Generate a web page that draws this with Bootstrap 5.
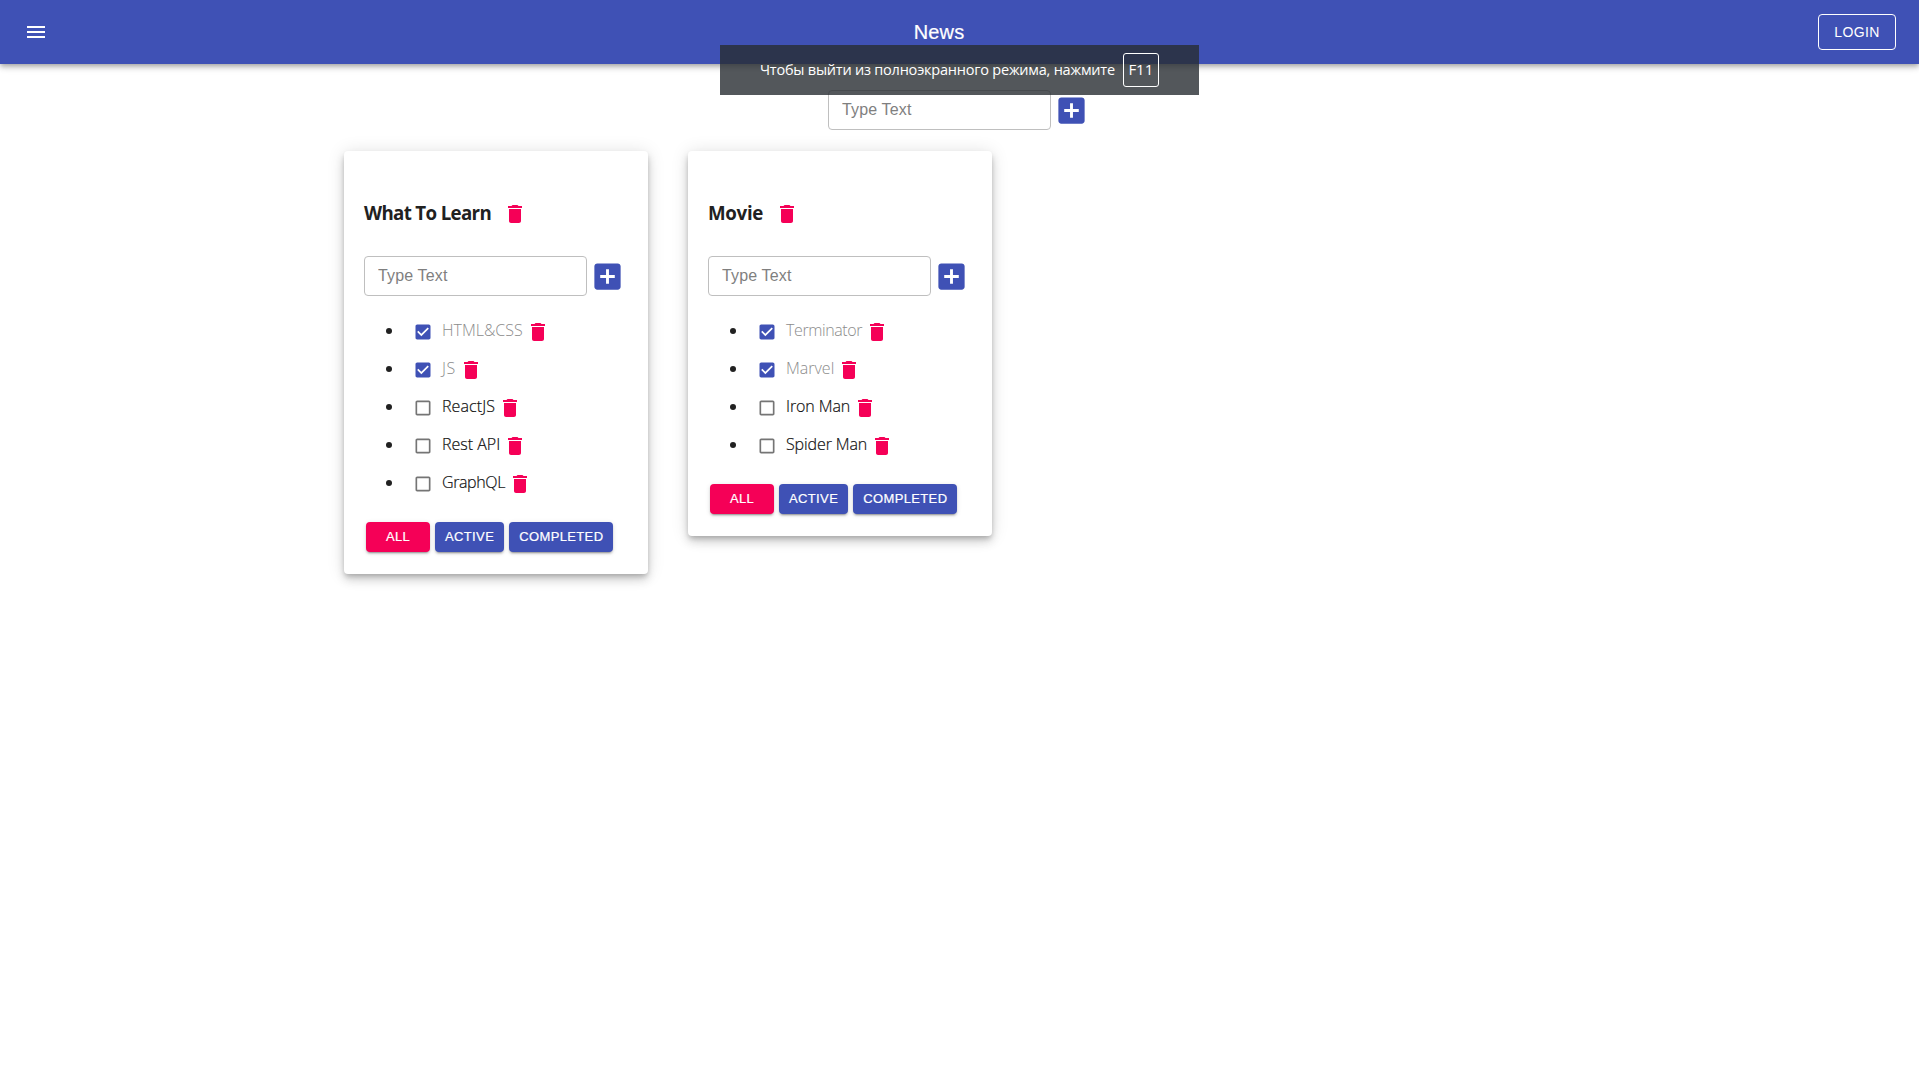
<!DOCTYPE html>
<html lang="ru">
<head>
<meta charset="utf-8">
<title>News</title>
<link rel="stylesheet" href="https://cdn.jsdelivr.net/npm/bootstrap@5.3.0/dist/css/bootstrap.min.css">
<style>
:root{--ink:#212121;--primary:#3f51b5;--accent:#f50057}
body{font-family:"Open Sans","Noto Sans",sans-serif;color:var(--ink);line-height:24px}
svg{display:block;flex:none;fill:currentColor}
.topbar{height:64px;padding:0 23px 0 24px;background:var(--primary);box-shadow:0 2px 4px -1px rgba(0,0,0,.2),0 4px 5px rgba(0,0,0,.14),0 1px 10px rgba(0,0,0,.12);font-family:"Liberation Sans",sans-serif}
.topbar h1{font-size:20px;letter-spacing:.15px;margin:0;-webkit-text-stroke:.2px #fff}
.menu-icon{margin-right:12px}
.login{font-size:14px;letter-spacing:.4px;line-height:24px;padding:5px 15px;border:1px solid #fff;border-radius:4px;color:#fff;background:none;height:36px;width:78px}
.page{width:1232px;margin-left:344px;padding-top:26px}
.field{width:223px;height:40px;border:1px solid #bfbfbf;border-radius:4px;padding:0 13px;font:16px "Liberation Sans",sans-serif;letter-spacing:.15px;background:#fff}
.field::placeholder{color:#7f7f7f;opacity:1}
.adder{gap:3px;color:var(--primary)}
.topadd{margin-left:484px;margin-bottom:21px}
.boards{gap:40px}
.board{width:304px;border:0;border-radius:4px;padding:49px 20px 20px;box-shadow:0 3px 5px -1px rgba(0,0,0,.2),0 6px 10px rgba(0,0,0,.14),0 1px 18px rgba(0,0,0,.12);color:var(--ink)}
.board h2{font-size:18.72px;font-weight:700;line-height:26px;margin:-1px 0 0;letter-spacing:-.32px}
.board h2.tight{letter-spacing:-.66px}
.titlebar{height:26px;margin-bottom:30px;gap:12px;color:var(--ink)}
.titlebar .bin{margin-top:2px}
.bin{color:var(--accent)}
.tasks{margin:16px 0 18px}
.task{height:38px}
.task::before{content:"";width:6px;height:6px;border-radius:50%;background:var(--ink);margin:0 21px 0 22px}
.task .box{color:#757575;margin:2px 9px 0 0}
.task .bin{margin:2px 0 0 3px}
.task .label{font-size:16px;font-weight:300;color:#111;white-space:nowrap;margin-top:-2px;-webkit-text-stroke:.2px currentColor}
.task.done .box{color:var(--primary)}
.task.done .label{color:#8c8c8c;-webkit-text-stroke:0}
.task .snug{letter-spacing:-.39px}
.task .close-set{letter-spacing:-.11px}
.task .airy{letter-spacing:.09px}
.task .loose{letter-spacing:.6px}
.filters{gap:5px;padding:2px}
.filters button{height:30px;min-width:64px;padding:0 10px 2px;border:0;border-radius:4px;background:var(--primary);color:#fff;font:13px "Liberation Sans",sans-serif;letter-spacing:.37px;-webkit-text-stroke:.2px #fff;box-shadow:0 3px 1px -2px rgba(0,0,0,.2),0 2px 2px rgba(0,0,0,.14),0 1px 5px rgba(0,0,0,.12)}
.filters .current{background:var(--accent)}
.notice{left:720px;top:45px;width:479px;height:50px;background:rgba(40,45,50,.8);color:#fff;font-size:14.5px;padding-left:40px;gap:8px}
.notice span{white-space:nowrap;letter-spacing:-.22px;margin-top:-1px}
.notice kbd{width:36px;height:34px;border:1px solid #fff;border-radius:3px;background:none;padding:0;font:15px/31px "Open Sans",sans-serif;text-align:center;color:#fff}
</style>
</head>
<body class="bg-white min-vh-100">
<svg class="d-none">
<symbol id="bin" viewBox="0 0 24 24"><path d="M6 19c0 1.100.900 2 2 2h8c1.100 0 2-.900 2-2V7H6v12zM19 4h-3.500l-1-1h-5l-1 1H5v2h14V4z"/></symbol>
<symbol id="add" viewBox="0 0 24 24"><path d="M19 3H5c-1.110 0-2 .900-2 2v14c0 1.100.890 2 2 2h14c1.100 0 2-.900 2-2V5c0-1.100-.900-2-2-2zm-2 10h-4v4h-2v-4H7v-2h4V7h2v4h4v2z"/></symbol>
<symbol id="on" viewBox="0 0 24 24"><path d="M19 3H5c-1.110 0-2 .900-2 2v14c0 1.100.890 2 2 2h14c1.110 0 2-.900 2-2V5c0-1.100-.890-2-2-2zm-9 14l-5-5 1.410-1.410L10 14.170l7.590-7.590L19 8l-9 9z"/></symbol>
<symbol id="off" viewBox="0 0 24 24"><path d="M19 5v14H5V5h14m0-2H5c-1.100 0-2 .900-2 2v14c0 1.100.900 2 2 2h14c1.100 0 2-.900 2-2V5c0-1.100-.900-2-2-2z"/></symbol>
</svg>
<header class="topbar d-flex align-items-center justify-content-between text-white position-relative">
<svg class="menu-icon" width="24" height="24" viewBox="0 0 24 24"><path d="M3 18h18v-2H3v2zm0-5h18v-2H3v2zm0-7v2h18V6H3z"/></svg>
<h1>News</h1>
<button class="login">LOGIN</button>
</header>
<main class="page">
<div class="adder topadd d-flex align-items-center"><input class="field" placeholder="Type Text"><svg width="35" height="35"><use href="#add"/></svg></div>
<div class="boards d-flex align-items-start">
<section class="board card">
<div class="titlebar d-flex align-items-center"><h2 class="tight">What To Learn</h2><svg class="bin" width="24" height="24"><use href="#bin"/></svg></div>
<div class="adder d-flex align-items-center"><input class="field" placeholder="Type Text"><svg width="35" height="35"><use href="#add"/></svg></div>
<ul class="tasks list-unstyled">
<li class="task done d-flex align-items-center"><svg class="box" width="20" height="20"><use href="#on"/></svg><span class="label">HTML&amp;CSS</span><svg class="bin" width="24" height="24"><use href="#bin"/></svg></li>
<li class="task done d-flex align-items-center"><svg class="box" width="20" height="20"><use href="#on"/></svg><span class="label loose">JS</span><svg class="bin" width="24" height="24"><use href="#bin"/></svg></li>
<li class="task d-flex align-items-center"><svg class="box" width="20" height="20"><use href="#off"/></svg><span class="label airy">ReactJS</span><svg class="bin" width="24" height="24"><use href="#bin"/></svg></li>
<li class="task d-flex align-items-center"><svg class="box" width="20" height="20"><use href="#off"/></svg><span class="label">Rest API</span><svg class="bin" width="24" height="24"><use href="#bin"/></svg></li>
<li class="task d-flex align-items-center"><svg class="box" width="20" height="20"><use href="#off"/></svg><span class="label snug">GraphQL</span><svg class="bin" width="24" height="24"><use href="#bin"/></svg></li>
</ul>
<div class="filters d-flex"><button class="current">ALL</button><button>ACTIVE</button><button>COMPLETED</button></div>
</section>
<section class="board card">
<div class="titlebar d-flex align-items-center"><h2>Movie</h2><svg class="bin" width="24" height="24"><use href="#bin"/></svg></div>
<div class="adder d-flex align-items-center"><input class="field" placeholder="Type Text"><svg width="35" height="35"><use href="#add"/></svg></div>
<ul class="tasks list-unstyled">
<li class="task done d-flex align-items-center"><svg class="box" width="20" height="20"><use href="#on"/></svg><span class="label snug">Terminator</span><svg class="bin" width="24" height="24"><use href="#bin"/></svg></li>
<li class="task done d-flex align-items-center"><svg class="box" width="20" height="20"><use href="#on"/></svg><span class="label">Marvel</span><svg class="bin" width="24" height="24"><use href="#bin"/></svg></li>
<li class="task d-flex align-items-center"><svg class="box" width="20" height="20"><use href="#off"/></svg><span class="label close-set">Iron Man</span><svg class="bin" width="24" height="24"><use href="#bin"/></svg></li>
<li class="task d-flex align-items-center"><svg class="box" width="20" height="20"><use href="#off"/></svg><span class="label close-set">Spider Man</span><svg class="bin" width="24" height="24"><use href="#bin"/></svg></li>
</ul>
<div class="filters d-flex"><button class="current">ALL</button><button>ACTIVE</button><button>COMPLETED</button></div>
</section>
</div>
</main>
<aside class="notice position-absolute d-flex align-items-center"><span>Чтобы выйти из полноэкранного режима, нажмите</span><kbd>F11</kbd></aside>
<script src="https://cdn.jsdelivr.net/npm/bootstrap@5.3.0/dist/js/bootstrap.bundle.min.js"></script>
</body>
</html>
